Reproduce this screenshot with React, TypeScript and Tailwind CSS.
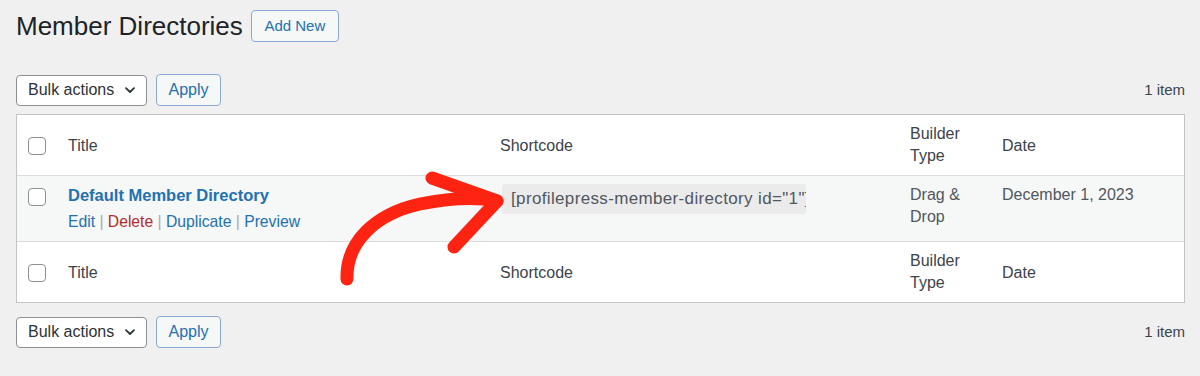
import React from 'react';

const font = { fontFamily: '"Liberation Sans", Arial, sans-serif' };

function Checkbox() {
  return <div className="w-[18px] h-[18px] rounded-[4px] border border-[#8c8f94] bg-white" />;
}

function BulkNav() {
  return (
    <div className="flex items-center h-8">
      <div className="flex items-center justify-between w-[131px] h-[31px] pl-[11px] pr-[10px] bg-white border border-[#8c8f94] rounded-[4px] text-[16px] text-[#2c3338]">
        <span>Bulk actions</span>
        <svg width="12" height="12" viewBox="0 0 12 12" fill="none" stroke="#2c3338" strokeWidth="1.8" strokeLinecap="round" strokeLinejoin="round">
          <path d="M2 4.2 L6 8 L10 4.2" />
        </svg>
      </div>
      <button className="ml-[9px] w-[65px] h-8 bg-[#f6f7f7] border border-[#86aad3] rounded-[4px] text-[16px] text-[#2271b1]">
        Apply
      </button>
    </div>
  );
}

function HeadRow({ top }: { top?: boolean }) {
  return (
    <div
      className={`grid grid-cols-[41px_432px_410px_92px_1fr] items-center py-2 text-[16px] leading-[22px] text-[#3c434a] ${
        top ? 'border-b border-[#dcdcde]' : 'border-t border-[#dcdcde]'
      }`}
    >
      <div className="pl-[11px] pt-[2px]">
        <Checkbox />
      </div>
      <div className="pl-[10px] pt-[2px]">Title</div>
      <div className="pl-[10px] pt-[2px]">Shortcode</div>
      <div className="pl-[10px]">
        Builder
        <br />
        Type
      </div>
      <div className="pl-[10px] pt-[2px]">Date</div>
    </div>
  );
}

export default function App() {
  return (
    <div className="min-h-screen bg-[#f0f0f1] pl-4 pr-[15px] pt-[10px] relative" style={font}>
      {/* heading */}
      <div className="flex items-center h-8">
        <h1 className="text-[26px] text-[#1d2327] leading-8">Member Directories</h1>
        <button className="ml-[8px] w-[88px] h-8 bg-[#f6f7f7] border border-[#86aad3] rounded-[4px] text-[15px] text-[#2271b1]">
          Add New
        </button>
      </div>

      <div className="flex items-center justify-between mt-8">
        <BulkNav />
        <span className="text-[15px] text-[#3c434a]">1 item</span>
      </div>

      {/* table */}
      <div className="mt-2 bg-white border border-[#c3c4c7]">
        <HeadRow top />
        <div className="grid grid-cols-[41px_432px_410px_92px_1fr] items-start py-2 bg-[#f6f7f7] text-[16px] leading-[22px] text-[#50575e]">
          <div className="pl-[11px] pt-[4px]">
            <Checkbox />
          </div>
          <div className="pl-[10px]">
            <div className="font-bold text-[#2271b1] text-[16.5px]">Default Member Directory</div>
            <div className="mt-[5px] text-[15.7px] text-[#2271b1]">
              Edit <span className="text-[#a7aaad]">|</span>{' '}
              <span className="text-[#b32d2e]">Delete</span> <span className="text-[#a7aaad]">|</span>{' '}
              Duplicate <span className="text-[#a7aaad]">|</span> Preview
            </div>
          </div>
          <div className="pl-3">
            <div className="w-[304px] h-[30px] bg-[#ebebec] rounded-[3px] px-[9px] flex items-center overflow-hidden whitespace-nowrap text-[17px] tracking-[0.35px] text-[#50575e]">
              [profilepress-member-directory id="1"]
            </div>
          </div>
          <div className="pl-[10px]">
            Drag &amp;
            <br />
            Drop
          </div>
          <div className="pl-[10px]">December 1, 2023</div>
        </div>
        <HeadRow />
      </div>

      <div className="flex items-center justify-between mt-[13px]">
        <BulkNav />
        <span className="text-[15px] text-[#3c434a]">1 item</span>
      </div>

      {/* red annotation arrow */}
      <svg
        className="absolute left-0 top-0 pointer-events-none"
        width="1200"
        height="376"
        viewBox="0 0 1200 376"
        fill="none"
        stroke="#ff2412"
        strokeWidth="13"
        strokeLinecap="round"
        strokeLinejoin="round"
      >
        <path d="M347 279 C 346 242, 375 214, 420 204 C 450 198, 478 197, 497 201" />
        <path d="M432 178 L 497 201 L 454 247" />
      </svg>
    </div>
  );
}
